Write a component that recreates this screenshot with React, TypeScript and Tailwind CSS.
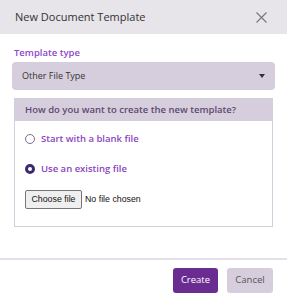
import { useState } from 'react';

function App() {
  const [mode, setMode] = useState<'blank' | 'existing'>('existing');

  return (
    <div className="w-[287px] h-[300px] bg-white flex flex-col" style={{ fontFamily: '"Open Sans", "Noto Sans", sans-serif' }}>
      <div className="h-[34px] bg-[#e7e4ea] flex items-center justify-between pl-[15px] pr-[20px] shrink-0">
        <h1 className="text-[11px] text-[#333]">New Document Template</h1>
        <button className="text-[#7a7a7a]">
          <svg width="11" height="11" viewBox="0 0 11 11" stroke="currentColor" strokeWidth="1.2" fill="none">
            <path d="M0.5 0.5L10.5 10.5M10.5 0.5L0.5 10.5" />
          </svg>
        </button>
      </div>

      <div className="flex-1 px-[12px] pt-[11px]">
        <label className="block pl-[2px] text-[9.5px] font-semibold text-[#8f47cc] leading-[16px]">Template type</label>
        <div className="mt-[1px] h-[28px] bg-[#d7cedd] rounded-[4px] flex items-center justify-between pl-[10px] pr-[10px]">
          <span className="text-[9px] text-[#333]">Other File Type</span>
          <svg width="6" height="4" viewBox="0 0 6 4" fill="#333">
            <path d="M0 0H6L3 4Z" />
          </svg>
        </div>

        <div className="mt-[8px] mx-[2px] border border-[#d7cedd] h-[129px]">
          <div className="h-[22px] bg-[#d7cedd] flex items-center px-[10px]">
            <span className="text-[9.5px] font-semibold text-[#5c4a6e]">How do you want to create the new template?</span>
          </div>
          <div className="pl-[10px] pt-[10px] flex flex-col">
            <button className="flex items-center gap-[6px] h-[16px]" onClick={() => setMode('blank')}>
              <span className={`w-[10px] h-[10px] rounded-full ${mode === 'blank' ? 'border-[3.5px] border-[#3d2a6e] bg-white' : 'border border-[#7a6a9a]'}`} />
              <span className="text-[9.5px] font-semibold text-[#8a45c2]">Start with a blank file</span>
            </button>
            <button className="mt-[14px] flex items-center gap-[6px] h-[16px]" onClick={() => setMode('existing')}>
              <span className={`w-[10px] h-[10px] rounded-full ${mode === 'existing' ? 'border-[3.5px] border-[#3d2a6e] bg-white' : 'border border-[#7a6a9a]'}`} />
              <span className="text-[9.5px] font-semibold text-[#8a45c2]">Use an existing file</span>
            </button>
            <div className="mt-[13px] flex items-center gap-[3px]">
              <button className="h-[19px] w-[57px] bg-[#efefef] border border-[#767676] rounded-[2px] text-[8.8px] text-[#111]" style={{ fontFamily: '"Liberation Sans", Arial, sans-serif' }}>
                Choose file
              </button>
              <span className="text-[8.8px] text-[#111]" style={{ fontFamily: '"Liberation Sans", Arial, sans-serif' }}>No file chosen</span>
            </div>
          </div>
        </div>
      </div>

      <div className="h-[42px] border-t-[2px] border-[#e4dfe8] flex items-center justify-end gap-[9px] pr-[14px] shrink-0">
        <button className="h-[25px] w-[45px] rounded-[3px] bg-[#6b2c91] text-white text-[9.5px]">Create</button>
        <button className="h-[25px] w-[46px] rounded-[3px] bg-[#d7cedd] text-[#555] text-[9.5px]">Cancel</button>
      </div>
    </div>
  );
}

export default App;
